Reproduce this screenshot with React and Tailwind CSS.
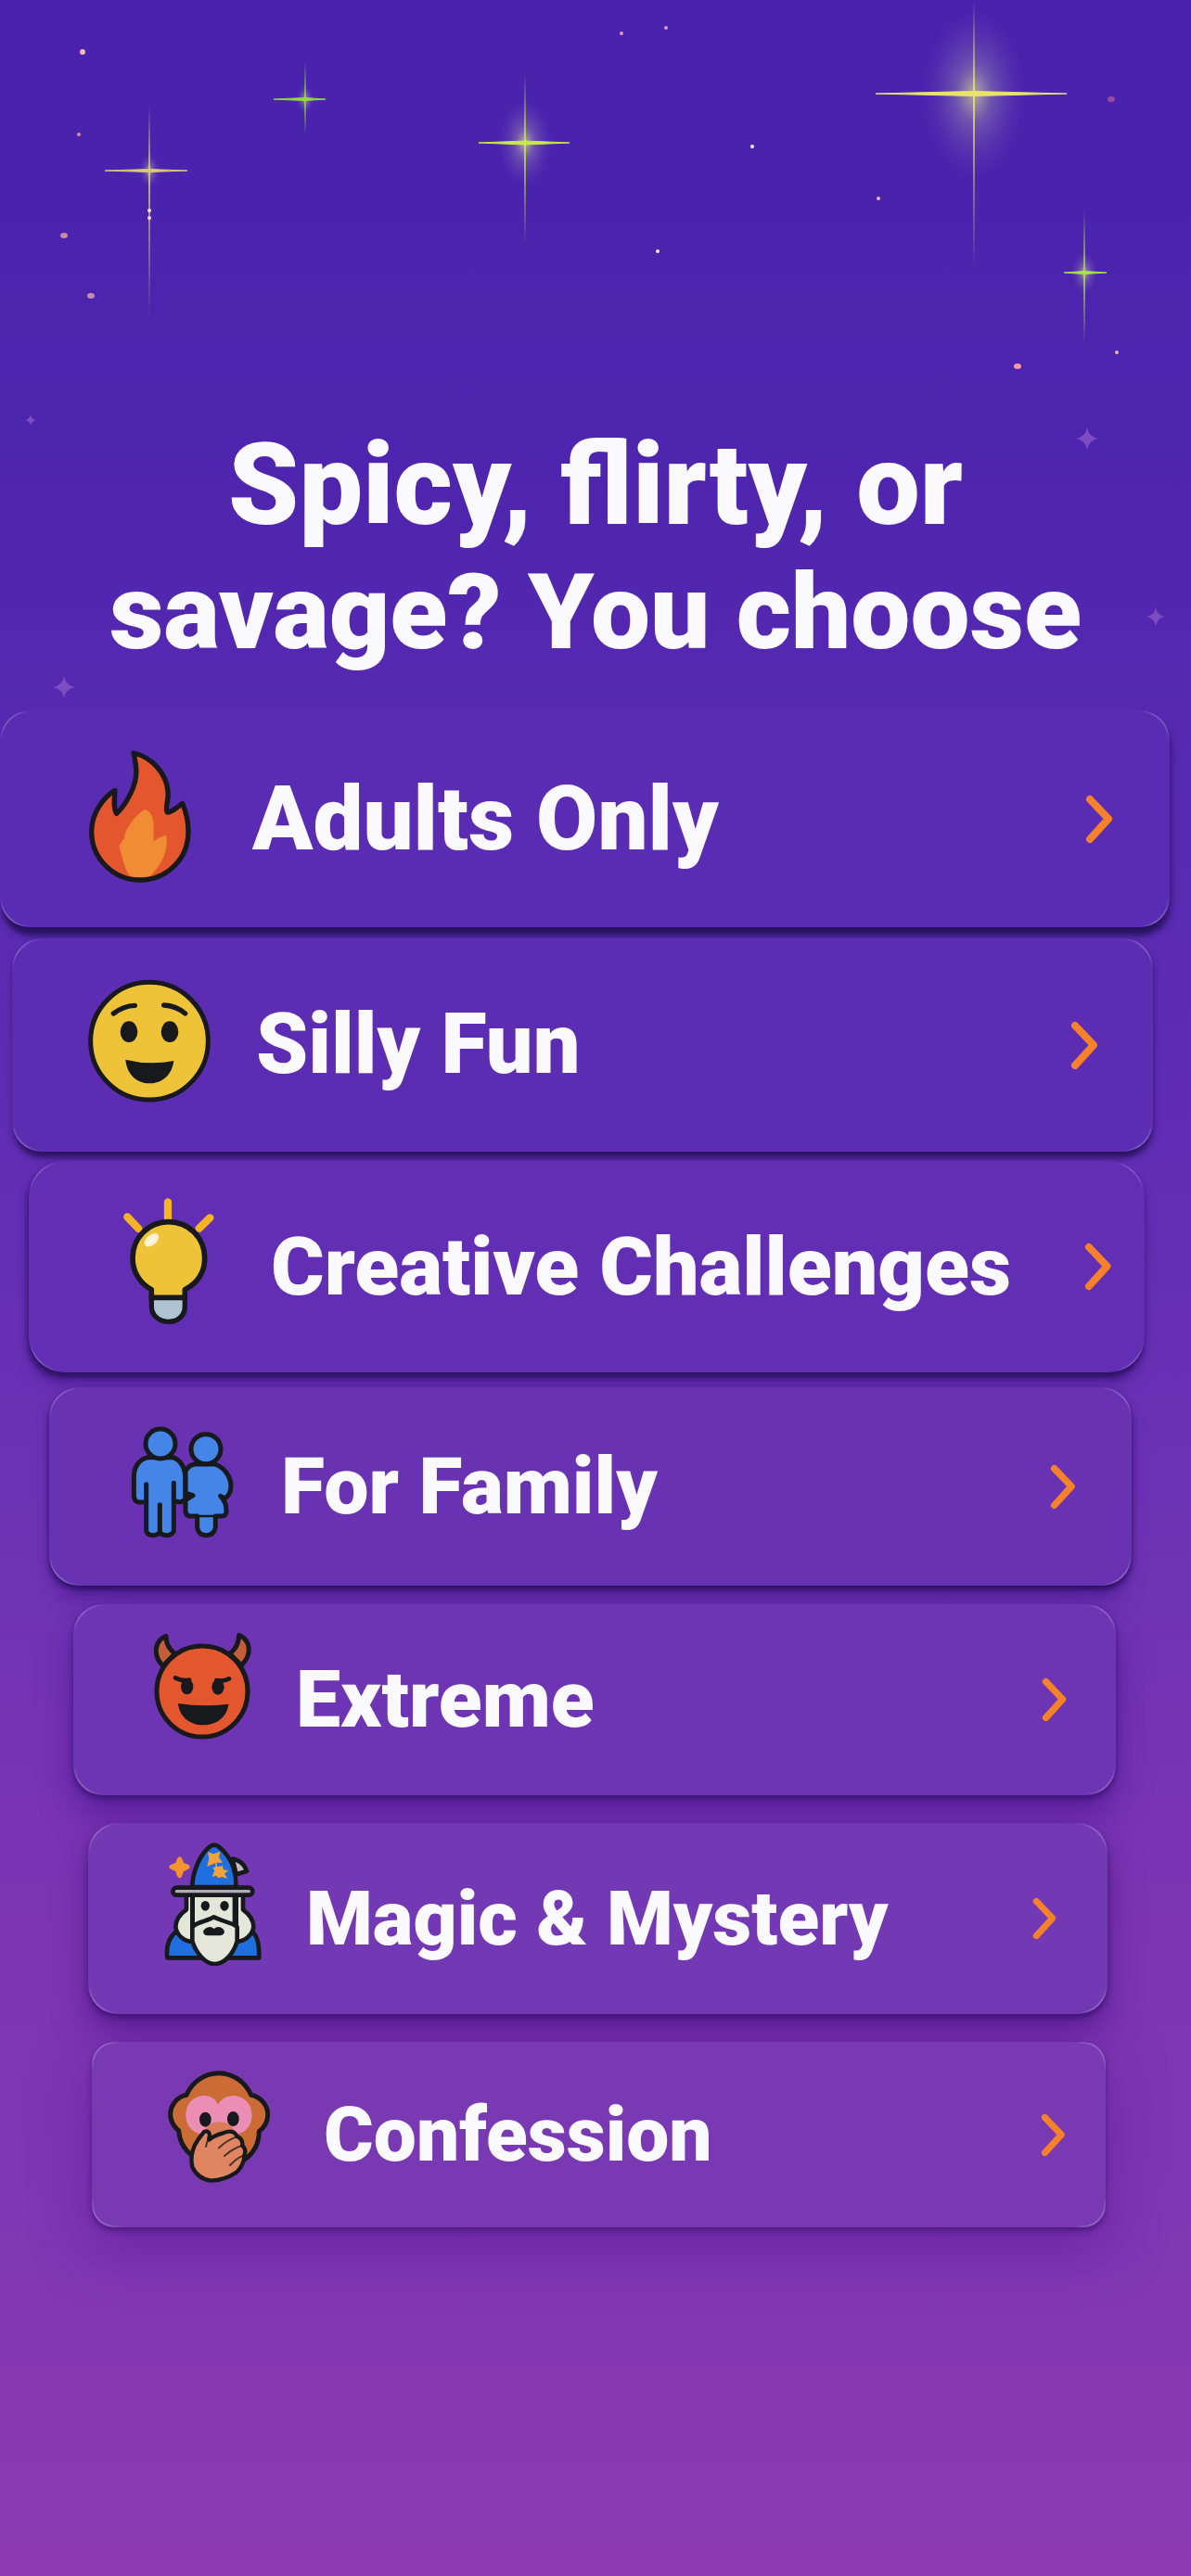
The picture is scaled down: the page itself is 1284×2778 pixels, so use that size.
const INK = "#17191c";

function FlameIcon() {
  return (
    <svg viewBox="285 174 387 450" className="h-[150px] w-[129px] shrink-0" aria-hidden="true">
      <path d="M432 186C440 222 450 262 423 316C408 346 390 370 377 382C366 366 370 332 372 307C335 330 296 380 296 440C296 530 370 597 452 597C538 597 609 530 609 440C609 404 600 372 590 349C574 360 560 377 541 378C532 362 547 342 543 310C538 250 490 200 432 186Z" fill="#e4572e" stroke={INK} strokeWidth="16" strokeLinejoin="round" />
      <path d="M467 370C485 370 497 395 497 420V472C510 462 525 455 538 452C545 500 525 545 486 584Q452 592 420 584C402 560 395 520 385 485L402 462C405 430 440 385 467 370Z" fill="#f08c34" />
    </svg>
  );
}

function SmileIcon() {
  return (
    <svg viewBox="285 904 399 450" className="h-[150px] w-[133px] shrink-0" aria-hidden="true">
      <circle cx="483" cy="1116" r="190" fill="#efc338" stroke={INK} strokeWidth="15" />
      <path d="M367 1027Q400 1002 436 1001M530 1000Q570 1002 599 1027" fill="none" stroke={INK} strokeWidth="16" strokeLinecap="round" />
      <ellipse cx="417" cy="1086" rx="28" ry="34" fill={INK} />
      <ellipse cx="549" cy="1086" rx="28" ry="34" fill={INK} />
      <path d="M406 1176Q484 1196 562 1180C556 1225 526 1253 484 1253C440 1253 410 1222 406 1176Z" fill={INK} />
    </svg>
  );
}

function BulbIcon() {
  return (
    <svg viewBox="399 183 333 450" className="h-[150px] w-[111px] shrink-0" aria-hidden="true">
      <path d="M543 199V250M412 247L448 285M679 250L644 284" stroke="#f5b324" strokeWidth="25" strokeLinecap="round" />
      <path d="M490 508H598V536C598 566 576 586 546 586C514 586 490 566 490 536Z" fill="#b0c3d2" stroke={INK} strokeWidth="16" />
      <path d="M490 508V482C452 462 429 424 429 380C429 315 480 263 545 263C611 263 662 315 662 380C662 424 640 460 598 482V508Z" fill="#efc338" stroke={INK} strokeWidth="17" strokeLinejoin="round" />
      <ellipse cx="490" cy="322" rx="27" ry="16" fill="#fff3d6" transform="rotate(-40 490 322)" />
    </svg>
  );
}

function FamilyIcon() {
  return (
    <svg viewBox="423 894 342 450" className="h-[150px] w-[114px] shrink-0" aria-hidden="true">
      <g fill="#4585e8" stroke={INK} strokeWidth="15" strokeLinejoin="round" strokeLinecap="round">
        <path d="M630 1047H695C728 1058 747 1090 747 1118Q746 1148 726 1158L713 1150Q732 1170 732 1198Q732 1215 718 1215H697V1252Q692 1277 667 1277Q642 1277 638 1252V1215H612Q600 1212 600 1198V1164L624 1148L600 1140V1070Q610 1050 630 1047Z" />
        <path d="M638 1215H697" strokeWidth="8" fill="none" />
        <circle cx="666" cy="998" r="48" />
        <path d="M480 1025H560C585 1035 598 1060 599 1090V1158Q596 1169 580 1169Q562 1169 562 1158V1262Q558 1277 540 1277Q524 1277 517 1268Q508 1277 495 1277Q475 1277 473 1262V1168Q465 1170 450 1170Q434 1168 433 1150V1085C435 1050 455 1028 480 1025Z" />
        <path d="M473 1112V1165M562 1108V1160M517 1178V1268" fill="none" />
        <circle cx="519" cy="981" r="48" />
      </g>
    </svg>
  );
}

function DevilIcon() {
  return (
    <svg viewBox="498 174 315 450" className="h-[150px] w-[105px] shrink-0" aria-hidden="true">
      <g stroke={INK} strokeWidth="15" strokeLinejoin="round" fill="#c25e38">
        <path d="M537 193C500 210 492 252 527 290L566 250C548 236 536 218 537 193Z" />
        <path d="M773 190C812 208 816 252 781 288L743 250C762 236 772 218 773 190Z" />
        <circle cx="654" cy="372" r="147" fill="#e4572e" />
      </g>
      <path d="M567 328Q590 340 612 335M741 331Q722 341 700 336" fill="none" stroke={INK} strokeWidth="14" strokeLinecap="round" />
      <ellipse cx="605" cy="357" rx="20" ry="25" fill={INK} />
      <ellipse cx="705" cy="358" rx="20" ry="25" fill={INK} />
      <path d="M576 411Q656 424 739 413C735 455 700 481 656 481C615 481 580 455 576 411Z" fill={INK} />
    </svg>
  );
}

function WizardIcon() {
  return (
    <svg viewBox="531 880 315 450" className="h-[150px] w-[105px] shrink-0 overflow-visible" aria-hidden="true">
      <g stroke={INK} strokeWidth="14" strokeLinejoin="round">
        <path d="M541 1232C537 1195 545 1165 572 1146H815C836 1165 838 1195 838 1232H548Z" fill="#1f6fe0" />
        <path d="M603 1028V1076C580 1092 568 1112 568 1132C572 1160 595 1178 622 1180V1028Z" fill="#e4e6da" />
        <path d="M786 1028V1076C808 1092 820 1112 820 1132C816 1160 792 1178 764 1180V1028Z" fill="#e4e6da" />
        <path d="M623 1028H759V1130H623Z" fill="#e4e6da" />
        <path d="M622 1132C640 1115 670 1114 692 1100C715 1114 745 1115 767 1132V1178C755 1220 725 1252 695 1252C660 1252 632 1210 622 1178Z" fill="#e4e6da" />
        <path d="M752 912C780 917 792 932 798 952L764 962Z" fill="#c3bcc6" />
        <path d="M622 1003C622 950 650 895 678 873Q693 861 708 873C745 903 765 950 763 1003Z" fill="#1f6fe0" />
        <rect x="559" y="1005" width="258" height="24" rx="12" fill="#b3aab5" />
      </g>
      <ellipse cx="664" cy="1064" rx="14" ry="16" fill={INK} />
      <ellipse cx="726" cy="1064" rx="14" ry="16" fill={INK} />
      <path d="M672 1160Q657 1158 657 1146Q662 1134 680 1132Q688 1133 692 1138Q698 1132 708 1132Q724 1136 726 1148Q724 1160 710 1160Z" fill={INK} />
      <path d="M581 905Q588 905 594 925Q614 930 614 938Q614 946 594 952Q588 974 581 974Q573 974 568 952Q547 946 547 938Q547 930 568 925Q574 905 581 905Z" fill="#f39431" />
      <path d="M672 890L690 896L712 888L708 908L720 924L700 924L703 938L720 934L722 946L738 950L726 960L736 976L718 970L706 974L700 966L686 970L694 950L688 942L698 936L696 926L670 936L676 910Z" fill="#f3a23a" />
    </svg>
  );
}

function MonkeyIcon() {
  return (
    <svg viewBox="543 198 360 450" className="h-[150px] w-[120px] shrink-0" aria-hidden="true">
      <path d="M707 224C755 224 795 255 812 295C840 300 866 325 866 358C866 385 850 405 838 412C838 450 825 480 790 505L620 490C595 470 580 440 578 410C560 395 551 375 551 355C553 325 575 300 603 295C620 255 660 224 707 224Z" fill="#cb6b36" stroke={INK} strokeWidth="15" strokeLinejoin="round" />
      <path d="M705 326C715 308 733 297 755 297C790 297 815 325 815 360C815 395 790 425 755 420H660C625 422 601 395 601 360C601 325 625 297 660 297C682 297 697 308 705 326Z" fill="#ec8db6" />
      <path d="M655 425C665 395 685 382 708 382C735 382 755 395 765 425V460H655Z" fill="#d97c5a" />
      <ellipse cx="664" cy="374" rx="19" ry="24" fill={INK} />
      <ellipse cx="754" cy="372" rx="19" ry="24" fill={INK} />
      <path d="M660 414Q676 408 678 424L676 440Q695 424 722 418Q755 404 766 428Q786 436 784 458Q798 472 790 490Q790 520 765 545Q725 572 682 572Q640 566 622 528Q612 480 640 440Z" fill="#df8561" stroke={INK} strokeWidth="13" strokeLinejoin="round" />
      <path d="M674 436Q668 452 666 462M766 430Q735 440 708 466M784 458Q755 466 726 492M788 490Q764 500 744 522" fill="none" stroke={INK} strokeWidth="6" strokeLinecap="round" opacity="0.75" />
    </svg>
  );
}

function Chevron({ size }) {
  return (
    <svg viewBox="0 0 30 53" className={"ml-auto w-auto shrink-0 " + size} fill="none" stroke="#f5822a" strokeWidth="8" strokeLinecap="round" strokeLinejoin="round" aria-hidden="true">
      <path d="M5 5L25 26L5 48" />
    </svg>
  );
}

const CATEGORIES = [
  {
    label: "Adults Only",
    Icon: FlameIcon,
    card: "mr-[23px] py-[42px] pl-[95px] pr-[61px] rounded-[32px] bg-[#5a2cb4] shadow-[2px_8px_6px_rgba(32,14,84,0.55),0_12px_6px_-4px_rgba(40,20,90,0.8)]",
    text: "text-[96px] leading-[110px]",
    chevron: "h-[53px]",
  },
  {
    label: "Silly Fun",
    Icon: SmileIcon,
    card: "mt-[12px] ml-[13px] mr-[41px] py-[40px] pl-[82px] pr-[59px] rounded-[32px] bg-[#5c2cb3] shadow-[1px_5px_6px_rgba(32,14,84,0.5),0_10px_6px_-4px_rgba(40,20,90,0.75)]",
    text: "text-[90px] leading-[110px]",
    chevron: "h-[53px]",
  },
  {
    label: "Creative Challenges",
    Icon: BulbIcon,
    card: "mt-[10px] ml-[31px] mr-[50px] py-[39px] pl-[102px] pr-[36px] rounded-[38px] bg-[#622eb3] shadow-[-2px_5px_6px_rgba(32,14,84,0.55),0_6px_6px_-2px_rgba(40,20,90,0.6),0_16px_16px_-6px_rgba(60,16,130,0.6)]",
    text: "text-[88px] leading-[110px]",
    chevron: "h-[52px]",
  },
  {
    label: "For Family",
    Icon: FamilyIcon,
    card: "mt-[16px] ml-[53px] mr-[64px] py-[32px] pl-[88px] pr-[60px] rounded-[32px] bg-[#6832b3] shadow-[0_4px_6px_rgba(32,14,84,0.6),0_4px_6px_-2px_rgba(40,20,90,0.6),0_20px_24px_-8px_rgba(60,16,130,0.6)]",
    text: "text-[86px] leading-[110px]",
    chevron: "h-[49px]",
  },
  {
    label: "Extreme",
    Icon: DevilIcon,
    card: "mt-[20px] ml-[79px] mr-[81px] py-[28px] pl-[87px] pr-[53px] rounded-[32px] bg-[#6d34b4] shadow-[0_4px_6px_rgba(36,14,90,0.6),0_20px_36px_rgba(70,16,140,0.6)]",
    text: "text-[86px] leading-[110px]",
    chevron: "h-[48px]",
  },
  {
    label: "Magic & Mystery",
    Icon: WizardIcon,
    card: "mt-[30px] ml-[95px] mr-[90px] py-[28px] pl-[82px] pr-[55px] rounded-[32px] bg-[#7338b3] shadow-[0_4px_6px_rgba(40,14,90,0.6),0_20px_36px_rgba(70,16,130,0.6)]",
    text: "text-[82px] leading-[110px]",
    chevron: "h-[46px]",
  },
  {
    label: "Confession",
    Icon: MonkeyIcon,
    card: "mt-[30px] ml-[99px] mr-[92px] py-[25px] pl-[82px] pr-[43px] rounded-[24px] bg-[#7939b3] shadow-[0_4px_6px_rgba(50,16,100,0.55),0_24px_60px_rgba(84,20,150,0.5)]",
    text: "text-[82px] leading-[110px]",
    chevron: "h-[47px]",
  },
];

const FLARES = [
  { x: 1050, y: 101, up: 101, down: 190, left: 106, right: 100, w: 5, color: "#e8e36a", glow: 70 },
  { x: 566, y: 154, up: 74, down: 110, left: 50, right: 48, w: 4, color: "#c5ea4a", glow: 36 },
  { x: 329, y: 107, up: 40, down: 38, left: 34, right: 22, w: 3, color: "#8fdc3c", glow: 12 },
  { x: 161, y: 184, up: 70, down: 160, left: 48, right: 41, w: 3, color: "#d9c77a", glow: 14 },
  { x: 1169, y: 294, up: 68, down: 78, left: 22, right: 24, w: 3, color: "#a6e04a", glow: 18 },
];

const DOTS = [
  [89, 56, "#ffb9a8", 3], [85, 145, "#e58a9a", 2], [69, 254, "#c98aa8", 4], [98, 319, "#c98ab0", 4],
  [670, 36, "#e59ab0", 2], [718, 30, "#e59ab0", 2], [811, 158, "#ffffff", 2], [709, 271, "#ffe1d0", 2],
  [947, 214, "#f0b0c0", 2], [1198, 107, "#9c4aa0", 4], [1204, 380, "#f0b0b0", 2], [1097, 395, "#f59aa0", 4],
  [161, 227, "#ffe1d0", 2], [161, 235, "#ffd8c8", 2],
];

const SPARKLES = [[1172, 473, 12], [1246, 665, 10], [69, 741, 12], [33, 453, 6]];

function NightSky() {
  return (
    <svg viewBox="0 0 1284 780" className="pointer-events-none absolute inset-x-0 top-0 h-auto w-full" aria-hidden="true">
      <defs>
        <radialGradient id="glow">
          <stop offset="0" stopColor="#cfcf9a" stopOpacity="0.8" />
          <stop offset="0.35" stopColor="#a79bb0" stopOpacity="0.4" />
          <stop offset="1" stopColor="#6a50b8" stopOpacity="0" />
        </radialGradient>
      </defs>
      {FLARES.map((f) => (
        <g key={f.x}>
          <ellipse cx={f.x} cy={f.y} rx={f.glow * 0.8} ry={f.glow * 1.3} fill="url(#glow)" />
          <path d={`M${f.x - 1} ${f.y}L${f.x} ${f.y - f.up}L${f.x + 1} ${f.y}L${f.x} ${f.y + f.down}Z`} fill={f.color} opacity="0.9" />
          <path d={`M${f.x - f.left} ${f.y}L${f.x} ${f.y - f.w / 2}L${f.x + f.right} ${f.y}L${f.x} ${f.y + f.w / 2}Z`} fill={f.color} stroke={f.color} strokeWidth="1" />
        </g>
      ))}
      {DOTS.map(([x, y, color, r]) => (
        <ellipse key={x + "-" + y} cx={x} cy={y} rx={r} ry={Math.min(r, 3)} fill={color} />
      ))}
      {SPARKLES.map(([x, y, r]) => (
        <path key={x} d={`M${x} ${y - r}Q${x + r * 0.15} ${y - r * 0.15} ${x + r} ${y}Q${x + r * 0.15} ${y + r * 0.15} ${x} ${y + r}Q${x - r * 0.15} ${y + r * 0.15} ${x - r} ${y}Q${x - r * 0.15} ${y - r * 0.15} ${x} ${y - r}Z`} fill="#7c4cc0" />
      ))}
    </svg>
  );
}

export default function App() {
  return (
    <main className="relative min-h-screen bg-[linear-gradient(to_bottom,#4822ad_0%,#4d24ae_16%,#5629b0_28%,#5f2cb3_43%,#6e33b5_60%,#7d35b3_75%,#8237b3_88%,#8c3bb2_100%)] pb-[376px] font-['Roboto',sans-serif]">
      <NightSky />
      <h1 className="relative mx-auto max-w-[1180px] pt-[455px] text-center text-[114px] leading-[137px] font-black text-[#fafafe]">
        <span className="block text-[122px]">Spicy, flirty, or</span>
        <span className="block">savage? You choose</span>
      </h1>
      <nav className="relative mt-[37px] flex flex-col" aria-label="Categories">
        {CATEGORIES.map(({ label, Icon, card, text, chevron }) => (
          <button key={label} type="button" className={"relative flex cursor-pointer items-center gap-12 text-left " + card}>
            <span className="pointer-events-none absolute inset-0 rounded-[inherit] border-2 border-white/20 [mask-image:radial-gradient(circle_at_0_0,#000_16px,transparent_32px),radial-gradient(circle_at_100%_0,#000_16px,transparent_32px),radial-gradient(circle_at_0_100%,#000_16px,transparent_32px),radial-gradient(circle_at_100%_100%,#000_16px,transparent_32px)]" />
            <Icon />
            <span className={"font-black whitespace-nowrap text-[#fafafe] " + text}>{label}</span>
            <Chevron size={chevron} />
          </button>
        ))}
      </nav>
    </main>
  );
}
